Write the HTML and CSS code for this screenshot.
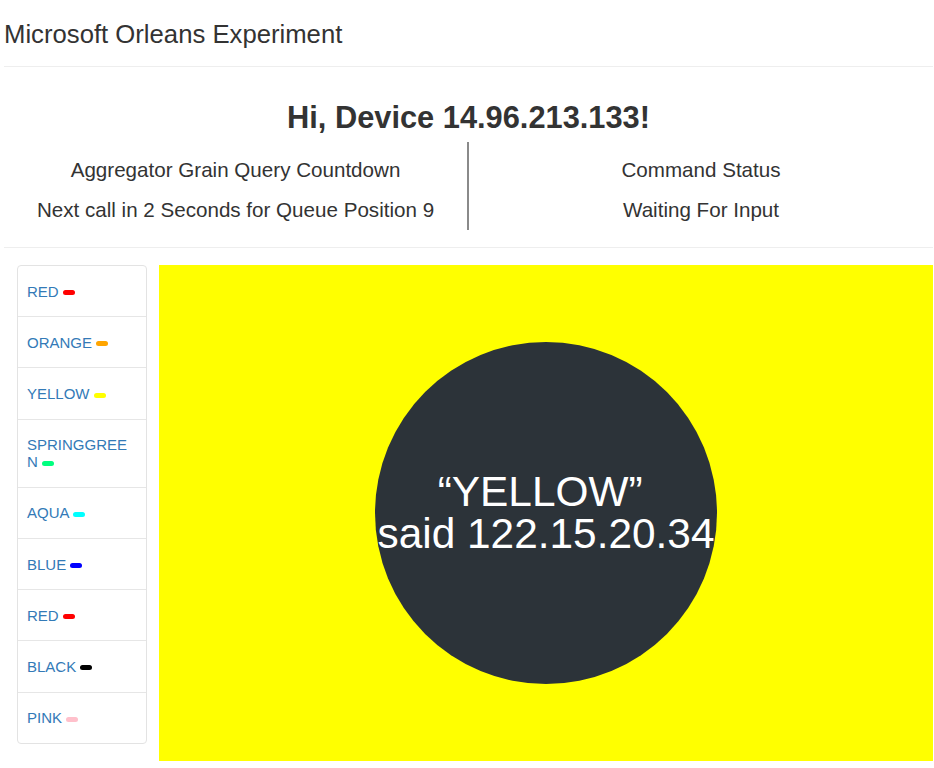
FILE: index.html
```html
<!DOCTYPE html>
<html lang="en">
<head>
<meta charset="utf-8">
<title>Microsoft Orleans Experiment</title>
<link rel="stylesheet" href="styles.css">
</head>
<body>
<div class="page">
  <header class="top">
    <h1 class="brand">Microsoft Orleans Experiment</h1>
  </header>
  <hr class="rule rule-top">
  <h2 class="greeting">Hi, Device 14.96.213.133!</h2>
  <div class="status-row">
    <div class="status-col">
      <div class="status-line">Aggregator Grain Query Countdown</div>
      <div class="status-line">Next call in 2 Seconds for Queue Position 9</div>
    </div>
    <div class="status-col status-col-right">
      <div class="status-line">Command Status</div>
      <div class="status-line">Waiting For Input</div>
    </div>
  </div>
  <hr class="rule rule-bottom">
  <div class="main">
    <ul class="color-list">
      <li class="color-item"><a href="#">RED <span class="swatch sw-red"></span></a></li>
      <li class="color-item"><a href="#">ORANGE <span class="swatch sw-orange"></span></a></li>
      <li class="color-item"><a href="#">YELLOW <span class="swatch sw-yellow"></span></a></li>
      <li class="color-item"><a href="#">SPRINGGREEN <span class="swatch sw-springgreen"></span></a></li>
      <li class="color-item"><a href="#">AQUA <span class="swatch sw-aqua"></span></a></li>
      <li class="color-item"><a href="#">BLUE <span class="swatch sw-blue"></span></a></li>
      <li class="color-item"><a href="#">RED <span class="swatch sw-red"></span></a></li>
      <li class="color-item"><a href="#">BLACK <span class="swatch sw-black"></span></a></li>
      <li class="color-item"><a href="#">PINK <span class="swatch sw-pink"></span></a></li>
    </ul>
    <div class="stage">
      <div class="bubble">
        <div class="bubble-text">
          <span class="bubble-line">“YELLOW”&nbsp;</span>
          <span class="bubble-line">said 122.15.20.34</span>
        </div>
      </div>
    </div>
  </div>
</div>
</body>
</html>
```

FILE: styles.css
```css
html, body {
  margin: 0;
  padding: 0;
  background: #fff;
}

body {
  font-family: "Liberation Sans", Arial, Helvetica, sans-serif;
  color: #333;
}

.page {
  padding: 0 1px 0 4px;
}

.top {
  padding-top: 20px;
}

.brand {
  margin: 0;
  font-size: 25.7px;
  line-height: 28px;
  font-weight: normal;
  color: #333;
}

.rule {
  border: 0;
  border-top: 1px solid #eee;
  margin: 0;
  height: 0;
}

.rule-top {
  margin-top: 18px;
}

.greeting {
  margin: 34px 0 0;
  font-size: 30.8px;
  line-height: 33px;
  font-weight: bold;
  text-align: center;
  color: #333;
}

.status-row {
  display: grid;
  grid-template-columns: 463px 1fr;
  margin-top: 8px;
}

.status-col {
  padding-top: 8px;
  text-align: center;
  font-size: 20.6px;
}

.status-col-right {
  border-left: 2px solid #8a8a8a;
}

.status-line {
  line-height: 40px;
  white-space: nowrap;
}

.rule-bottom {
  margin-top: 17px;
}

.main {
  display: flex;
  align-items: flex-start;
  gap: 12px;
  margin-top: 17px;
  padding-left: 13px;
}

.color-list {
  list-style: none;
  margin: 0;
  padding: 0;
  width: 130px;
  box-sizing: border-box;
  border: 1px solid #e3e3e3;
  border-radius: 4px;
  flex: none;
}

.color-item {
  padding: 16.6px 9px;
  font-size: 15px;
  line-height: 17px;
  border-top: 1px solid #e6e6e6;
  overflow-wrap: anywhere;
}

.color-item:first-child {
  border-top: 0;
}

.color-item a {
  color: #337ab7;
  text-decoration: none;
}

.swatch {
  display: inline-block;
  width: 12px;
  height: 5px;
  border-radius: 3px;
  vertical-align: middle;
}

.sw-red { background: #ff0000; }
.sw-orange { background: #ffa500; }
.sw-yellow { background: #ffff00; }
.sw-springgreen { background: #00ff7f; }
.sw-aqua { background: #00ffff; }
.sw-blue { background: #0000ff; }
.sw-black { background: #000000; }
.sw-pink { background: #ffc0cb; }

.stage {
  flex: 1;
  height: 496px;
  background: #ffff00;
  display: flex;
  align-items: center;
  justify-content: center;
}

.bubble {
  width: 342px;
  height: 342px;
  border-radius: 50%;
  background: #2c3339;
  display: flex;
  align-items: center;
  justify-content: center;
}

.bubble-text {
  color: #fff;
  font-size: 42.4px;
  line-height: 42px;
  text-align: center;
  white-space: nowrap;
}

.bubble-line {
  display: block;
}
```
